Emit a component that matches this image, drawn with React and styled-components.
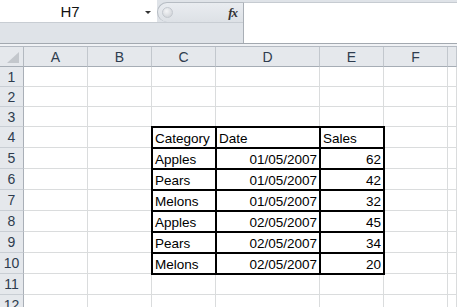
import React from "react";
import styled, { createGlobalStyle } from "styled-components";

const Global = createGlobalStyle`
  html, body { margin: 0; padding: 0; background: #fff; overflow: hidden; }
  body { font-family: "Liberation Sans", Arial, sans-serif; }
`;

const Page = styled.div`
  width: 457px;
  height: 307px;
  overflow: hidden;
`;

const TopBar = styled.div`
  display: flex;
  height: 43px;
  background: #dfe3e8;
`;

const LeftPane = styled.div`
  width: 243px;
  display: flex;
  flex-direction: column;
`;

const NameRow = styled.div`
  display: flex;
  height: 22px;
  flex-shrink: 0;
  border-bottom: 1px solid #c8cdd3;
`;

const NameBox = styled.div`
  width: 157px;
  background: #fff;
  display: flex;
  align-items: center;
  position: relative;
  font-size: 15px;
  color: #111;
`;

const NameText = styled.span`
  width: 140px;
  text-align: center;
`;

const Arrow = styled.span`
  position: absolute;
  left: 145px;
  top: 11px;
  width: 0;
  height: 0;
  border-left: 3px solid transparent;
  border-right: 3px solid transparent;
  border-top: 3px solid #333;
`;

const FxPane = styled.div`
  flex: 1;
  padding-top: 2px;
  display: flex;
`;

const Pill = styled.div`
  flex: 1;
  display: flex;
  align-items: center;
  justify-content: space-between;
  border: 1px solid #b6bcc3;
  border-right: none;
  border-bottom: none;
  border-radius: 11px 0 0 11px;
  background: linear-gradient(#e9ecf0, #dde1e6);
  padding: 0 6px 0 4px;
`;

const Knob = styled.span`
  width: 9px;
  height: 9px;
  border-radius: 50%;
  background: radial-gradient(circle at 40% 35%, #f4f5f7, #c9cdd2);
  border: 1px solid #c3c8ce;
`;

const Fx = styled.span`
  font-family: "Liberation Serif", "Times New Roman", serif;
  font-style: italic;
  font-weight: bold;
  font-size: 13px;
  color: #333;
  letter-spacing: -1px;
`;

const GrayFill = styled.div`
  flex: 1;
`;

const FormulaInput = styled.div`
  flex: 1;
  margin-top: 2px;
  background: #fff;
  border-left: 1px solid #a9afb6;
  border-top: 1px solid #c6cbd1;
`;

const Divider = styled.div`
  height: 2px;
  border-top: 1px solid #a3a9b0;
  border-bottom: 1px solid #b4bac2;
  background: #f0f2f5;
`;

const Grid = styled.div`
  display: grid;
  grid-template-columns: 24px 64px 64px 64px 104px 64px 64px 1fr;
  grid-template-rows: 20px 20px 20px 20px repeat(9, 21px);
`;

const Corner = styled.div`
  box-sizing: border-box;
  background: #e5e8ec;
  border-right: 1px solid #b3b9c0;
  border-bottom: 1px solid #a6adb5;
  display: flex;
  align-items: flex-end;
  justify-content: flex-end;
  padding: 0 4px 3px 0;
`;

const CornerTri = styled.span`
  width: 0;
  height: 0;
  border-left: 12px solid transparent;
  border-bottom: 11px solid #c3c7cc;
`;

const ColHead = styled.div`
  box-sizing: border-box;
  background: #e5e8ec;
  border-right: 1px solid #c2c7cd;
  border-bottom: 1px solid #a6adb5;
  display: flex;
  align-items: center;
  justify-content: center;
  font-size: 14px;
  color: #2e3c4e;
`;

const RowHead = styled.div`
  box-sizing: border-box;
  background: #e5e8ec;
  border-right: 1px solid #a9afb7;
  border-bottom: 1px solid #c9ced4;
  display: flex;
  align-items: center;
  justify-content: center;
  font-size: 14px;
  color: #2e3c4e;
`;

const Cell = styled.div`
  box-sizing: border-box;
  position: relative;
  border-right: 1px solid #dadcdd;
  border-bottom: 1px solid #dadcdd;
  display: flex;
  align-items: flex-end;
  justify-content: ${(p) => (p.$right ? "flex-end" : "flex-start")};
  padding: 0 2px 1px 3px;
  font-size: 13.5px;
  color: #000;
  white-space: nowrap;

  ${(p) =>
    p.$boxed &&
    `
    &::after {
      content: "";
      position: absolute;
      top: -1px;
      left: -1px;
      right: -2px;
      bottom: -2px;
      border: 2px solid #000;
      z-index: 1;
      pointer-events: none;
    }
  `}
`;

const columns = ["A", "B", "C", "D", "E", "F", "G"];

const table = {
  4: [["Category"], ["Date"], ["Sales"]],
  5: [["Apples"], ["01/05/2007", true], ["62", true]],
  6: [["Pears"], ["01/05/2007", true], ["42", true]],
  7: [["Melons"], ["01/05/2007", true], ["32", true]],
  8: [["Apples"], ["02/05/2007", true], ["45", true]],
  9: [["Pears"], ["02/05/2007", true], ["34", true]],
  10: [["Melons"], ["02/05/2007", true], ["20", true]],
};

export default function App() {
  const rows = [];
  for (let r = 1; r <= 12; r++) {
    rows.push(<RowHead key={`h${r}`}>{r}</RowHead>);
    columns.forEach((c, ci) => {
      const data = table[r];
      const inTable = data && ci >= 2 && ci <= 4;
      const entry = inTable ? data[ci - 2] : null;
      rows.push(
        <Cell key={`${c}${r}`} $boxed={inTable} $right={entry && entry[1]}>
          {entry ? entry[0] : ""}
        </Cell>
      );
    });
  }
  return (
    <Page>
      <Global />
      <TopBar>
        <LeftPane>
          <NameRow>
            <NameBox>
              <NameText>H7</NameText>
              <Arrow />
            </NameBox>
            <FxPane>
              <Pill>
                <Knob />
                <Fx>fx</Fx>
              </Pill>
            </FxPane>
          </NameRow>
          <GrayFill />
        </LeftPane>
        <FormulaInput />
      </TopBar>
      <Divider />
      <Grid>
        <Corner>
          <CornerTri />
        </Corner>
        {columns.map((c) => (
          <ColHead key={c}>{c === "G" ? "" : c}</ColHead>
        ))}
        {rows}
      </Grid>
    </Page>
  );
}
